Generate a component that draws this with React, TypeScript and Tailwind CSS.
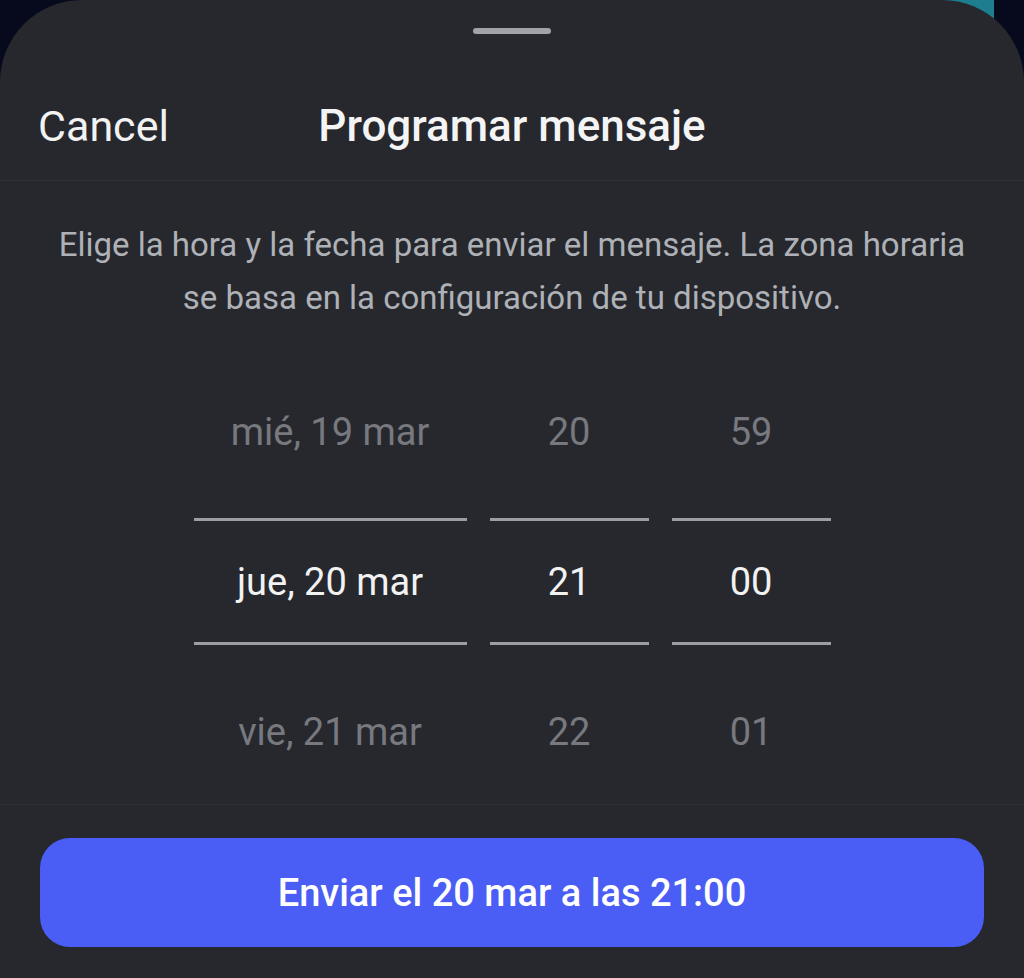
import React from "react";

const font = { fontFamily: "Roboto, 'Noto Sans', sans-serif" };

function Column({
  width,
  top,
  mid,
  bottom,
}: {
  width: string;
  top: string;
  mid: string;
  bottom: string;
}) {
  return (
    <div className={`flex flex-col ${width}`}>
      <div className="h-[60px] flex items-center justify-center text-[38px] text-[#77797e] leading-none">
        {top}
      </div>
      <div className="mt-[56px] h-[3px] bg-[#9c9ea3]" />
      <div className="h-[121px] flex items-center justify-center text-[38px] text-[#f2f2f3] leading-none">
        {mid}
      </div>
      <div className="h-[3px] bg-[#9c9ea3]" />
      <div className="mt-[57px] h-[60px] flex items-center justify-center text-[38px] text-[#77797e] leading-none">
        {bottom}
      </div>
    </div>
  );
}

export default function App() {
  return (
    <div
      className="relative w-[1024px] h-[978px] overflow-hidden bg-[#060a1c]"
      style={font}
    >
      <div className="absolute right-[30px] top-0 w-[60px] h-[18px] bg-[#1c7e8e]" />
      <div className="relative h-full rounded-t-[82px] bg-[#26282e] flex flex-col">
        <div className="pt-[28px] flex justify-center">
          <div className="w-[78px] h-[6px] rounded-full bg-[#a0a3a9]" />
        </div>
        <div className="h-[146px] pt-[38px] grid grid-cols-[1fr_auto_1fr] items-center px-[38px]">
          <span className="text-[43px] text-[#f2f2f3] leading-none justify-self-start">
            Cancel
          </span>
          <span className="text-[44px] font-medium text-[#f4f4f5] leading-none">
            Programar mensaje
          </span>
          <span />
        </div>
        <div className="h-px bg-[#2f3137]" />
        <div className="pt-[37px] px-[30px] text-center text-[33px] leading-[53px] text-[#aeb1b6]">
          Elige la hora y la fecha para enviar el mensaje. La zona horaria
          <br />
          se basa en la configuración de tu dispositivo.
        </div>
        <div className="pt-[78px] flex justify-center gap-[23px]">
          <Column width="w-[273px]" top="mié, 19 mar" mid="jue, 20 mar" bottom="vie, 21 mar" />
          <Column width="w-[159px]" top="20" mid="21" bottom="22" />
          <Column width="w-[159px]" top="59" mid="00" bottom="01" />
        </div>
        <div className="mt-[42px] h-px bg-[#2c2e34]" />
        <div className="px-[40px] pt-[33px]">
          <div className="h-[109px] rounded-[30px] bg-[#4a5df4] flex items-center justify-center text-[38px] font-medium text-white leading-none">
            Enviar el 20 mar a las 21:00
          </div>
        </div>
      </div>
    </div>
  );
}
